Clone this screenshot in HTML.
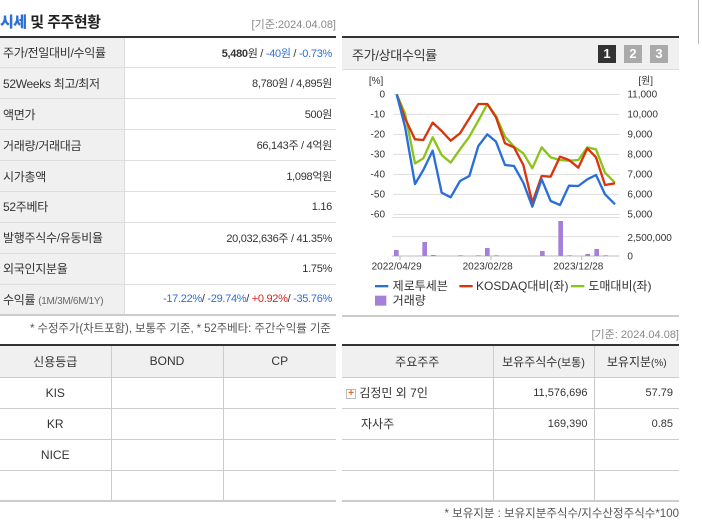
<!DOCTYPE html>
<html><head><meta charset="utf-8"><style>
*{margin:0;padding:0;box-sizing:border-box}
body{width:702px;height:525px;background:#fff;font-family:"Liberation Sans","Noto Sans CJK KR",sans-serif;font-size:12px;color:#333;position:relative;overflow:hidden}
.a{position:absolute}
.title{left:0;top:11px;font-size:15px;font-weight:bold;color:#222;letter-spacing:-0.5px}
.title b{color:#2d6fd6}
.gray{color:#888}
table{border-collapse:collapse;position:absolute}
.t1{left:0;top:36px;width:336px;border-top:2px solid #333;border-bottom:2px solid #ccc}
.t1 td{height:30.9px;border-bottom:1px solid #ddd;font-size:12px;letter-spacing:-0.3px}
.t1 td.l{width:124px;background:#f0f0f0;border-right:1px solid #ddd;padding-left:3px}
.t1 td.v{text-align:right;padding-right:4px;font-size:11px}
.blue{color:#2d6fd6}.red{color:#e0201a}
.t2{top:344px;border-top:2px solid #333;border-bottom:2px solid #ccc}
.t2 th{height:32px;background:#f0f0f0;font-weight:normal;border-bottom:1px solid #ccc;border-right:1px solid #ccc;font-size:12px}
.t2 td{height:31px;border-bottom:1px solid #ccc;border-right:1px solid #ccc;font-size:12px}
.t2 th:last-child,.t2 td:last-child{border-right:none}
.t2 tr:last-child td{border-bottom:none}
.c{text-align:center}.r{text-align:right;padding-right:6px;font-size:11px!important}
</style></head><body>
<div class="a title"><b>시세</b> 및 주주현황</div>
<div class="a gray" style="right:366px;top:16px;font-size:11px">[기준:2024.04.08]</div>
<table class="t1">
<tr><td class="l">주가/전일대비/수익률</td><td class="v"><b>5,480</b>원 / <span class="blue">-40원</span> / <span class="blue">-0.73%</span></td></tr>
<tr><td class="l">52Weeks 최고/최저</td><td class="v">8,780원 / 4,895원</td></tr>
<tr><td class="l">액면가</td><td class="v">500원</td></tr>
<tr><td class="l">거래량/거래대금</td><td class="v">66,143주 / 4억원</td></tr>
<tr><td class="l">시가총액</td><td class="v">1,098억원</td></tr>
<tr><td class="l">52주베타</td><td class="v">1.16</td></tr>
<tr><td class="l">발행주식수/유동비율</td><td class="v">20,032,636주 / 41.35%</td></tr>
<tr><td class="l">외국인지분율</td><td class="v">1.75%</td></tr>
<tr><td class="l">수익률 <span style="font-size:10px;color:#666">(1M/3M/6M/1Y)</span></td><td class="v" style="font-size:11px"><span class="blue">-17.22%</span>/ <span class="blue">-29.74%</span>/ <span class="red">+0.92%</span>/ <span class="blue">-35.76%</span></td></tr>
</table>
<div class="a" style="left:30px;top:320px;font-size:11.5px;color:#555;letter-spacing:-0.1px">* 수정주가(차트포함), 보통주 기준, * 52주베타: 주간수익률 기준</div>
<div class="a gray" style="right:23px;top:326px;font-size:11px">[기준: 2024.04.08]</div>

<div class="a" style="left:342px;top:36px;width:337px;height:281px;border-top:2px solid #333;border-bottom:2px solid #ccc">
<div style="height:32px;background:#f0f0f0;border-bottom:1px solid #ddd;position:relative">
<span class="a" style="left:10px;top:7px;font-size:13px;letter-spacing:-0.3px">주가/상대수익률</span>
<span class="a" style="left:256px;top:7px;width:18px;height:18px;background:#333;color:#fff;font-weight:bold;text-align:center;line-height:18px;font-size:13px">1</span>
<span class="a" style="left:282px;top:7px;width:18px;height:18px;background:#aaa;color:#fff;font-weight:bold;text-align:center;line-height:18px;font-size:13px">2</span>
<span class="a" style="left:308px;top:7px;width:18px;height:18px;background:#aaa;color:#fff;font-weight:bold;text-align:center;line-height:18px;font-size:13px">3</span>
</div></div>
<div class="a" style="left:698px;top:0;width:1px;height:44px;background:#bbb"></div>

<svg class="a" style="left:340px;top:30px" width="362" height="290" viewBox="0 0 1086 870" font-family="Liberation Sans, Noto Sans CJK KR, sans-serif">
<g stroke="#ddd" stroke-width="3">
<line x1="160" y1="193" x2="838" y2="193"/><line x1="160" y1="253" x2="838" y2="253"/><line x1="160" y1="313" x2="838" y2="313"/><line x1="160" y1="373" x2="838" y2="373"/><line x1="160" y1="433" x2="838" y2="433"/><line x1="160" y1="493" x2="838" y2="493"/><line x1="160" y1="553" x2="838" y2="553"/>
<line x1="155" y1="563" x2="838" y2="563"/><line x1="155" y1="620" x2="838" y2="620"/>
</g>
<line x1="155" y1="678" x2="838" y2="678" stroke="#bbb" stroke-width="3"/>
<g stroke="#bbb" stroke-width="3"><line x1="180" y1="678" x2="180" y2="690"/><line x1="453" y1="678" x2="453" y2="690"/><line x1="725" y1="678" x2="725" y2="690"/></g>
<g fill="#a67fd8">
<rect x="162" y="660" width="14" height="18"/><rect x="247" y="636" width="14" height="42"/><rect x="273" y="675" width="14" height="3"/><rect x="355" y="676" width="14" height="2"/><rect x="408" y="676" width="14" height="2"/><rect x="435" y="654" width="14" height="24"/><rect x="462" y="676" width="14" height="2"/><rect x="600" y="663" width="14" height="15"/><rect x="655" y="573" width="14" height="105"/><rect x="682" y="676" width="14" height="2"/><rect x="736" y="672" width="14" height="6"/><rect x="763" y="657" width="14" height="21"/><rect x="790" y="676" width="14" height="2"/>
</g>
<g fill="none" stroke-width="7" stroke-linejoin="round">
<polyline stroke="#8bc418" points="170,193 195,250 225,400 250,385 278,322 305,375 332,398 360,358 388,320 415,272 442,222 468,258 495,320 522,350 550,370 577,415 605,352 632,382 660,390 687,392 715,390 742,352 768,358 795,428 825,458"/>
<polyline stroke="#d9340e" points="170,193 195,265 225,328 250,330 278,278 305,303 332,332 360,310 388,265 415,222 442,222 468,262 495,340 522,352 550,405 577,518 605,438 632,440 660,380 687,390 715,413 742,355 768,382 795,465 825,460"/>
<polyline stroke="#2a6fd8" points="170,193 195,290 225,462 250,420 278,362 305,488 332,502 360,453 388,438 415,348 442,313 468,335 495,405 522,408 550,458 577,530 605,448 632,513 660,525 687,467 715,468 742,448 768,435 795,493 825,523"/>
</g>
<g font-size="30" fill="#333" text-anchor="end">
<text x="130" y="162">[%]</text>
<text x="135" y="203">0</text><text x="135" y="263">-10</text><text x="135" y="323">-20</text><text x="135" y="383">-30</text><text x="135" y="443">-40</text><text x="135" y="503">-50</text><text x="135" y="563">-60</text>
</g>
<g font-size="30" fill="#333">
<text x="895" y="162">[원]</text>
<text x="862" y="203">11,000</text><text x="862" y="263">10,000</text><text x="862" y="323">9,000</text><text x="862" y="383">8,000</text><text x="862" y="443">7,000</text><text x="862" y="503">6,000</text><text x="862" y="563">5,000</text><text x="862" y="633">2,500,000</text><text x="862" y="688">0</text>
</g>
<g font-size="30" fill="#333" text-anchor="middle">
<text x="170" y="718">2022/04/29</text><text x="443" y="718">2023/02/28</text><text x="715" y="718">2023/12/28</text>
</g>
<g font-size="36" fill="#333">
<rect x="105" y="765" width="40" height="7" fill="#2a6fd8"/><text x="158" y="780">제로투세븐</text>
<rect x="358" y="765" width="40" height="7" fill="#d9340e"/><text x="408" y="780">KOSDAQ대비(좌)</text>
<rect x="693" y="765" width="40" height="7" fill="#8bc418"/><text x="745" y="780">도매대비(좌)</text>
<rect x="105" y="797" width="34" height="30" fill="#a67fd8"/><text x="158" y="823">거래량</text>
</g>
</svg>

<table class="t2" style="left:0;width:336px">
<tr><th style="width:111px">신용등급</th><th style="width:112px">BOND</th><th>CP</th></tr>
<tr><td class="c">KIS</td><td></td><td></td></tr>
<tr><td class="c">KR</td><td></td><td></td></tr>
<tr><td class="c">NICE</td><td></td><td></td></tr>
<tr><td></td><td></td><td></td></tr>
</table>
<table class="t2" style="left:342px;width:337px">
<tr><th style="width:151px">주요주주</th><th style="width:101px">보유주식수<span style="font-size:11px">(보통)</span></th><th>보유지분<span style="font-size:10px">(%)</span></th></tr>
<tr><td style="padding-left:4px"><span style="display:inline-block;width:10px;height:10px;border:1px solid #bbb;color:#e8641e;font-size:10px;line-height:8px;text-align:center;font-weight:bold;vertical-align:middle">+</span> 김정민 외 7인</td><td class="r">11,576,696</td><td class="r">57.79</td></tr>
<tr><td style="padding-left:19px">자사주</td><td class="r">169,390</td><td class="r">0.85</td></tr>
<tr><td></td><td></td><td></td></tr>
<tr><td></td><td></td><td></td></tr>
</table>
<div class="a" style="right:23px;top:505px;font-size:11.5px;color:#555;letter-spacing:0px">* 보유지분 : 보유지분주식수/지수산정주식수*100</div>
</body></html>
